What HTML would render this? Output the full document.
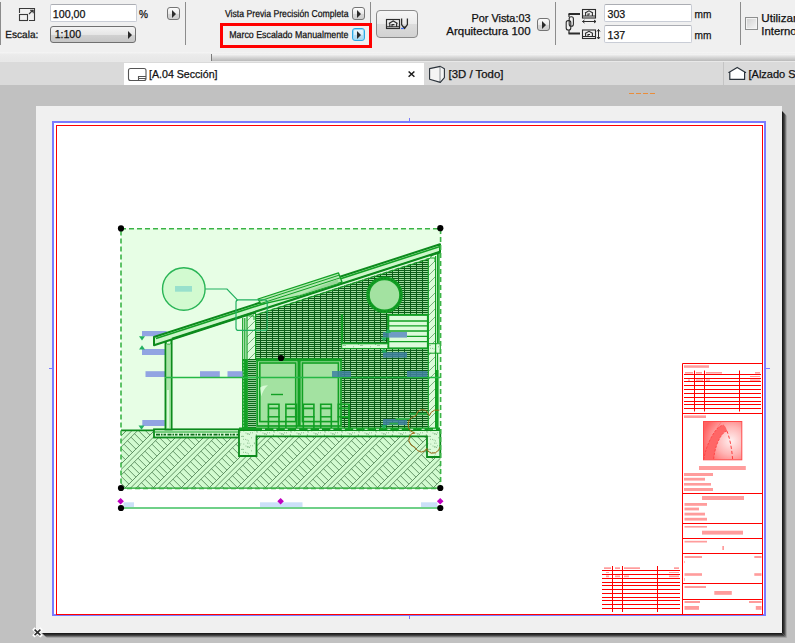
<!DOCTYPE html>
<html lang="es">
<head>
<meta charset="utf-8">
<title>Marco Escalado Manualmente</title>
<style>
html,body{margin:0;padding:0;}
body{width:795px;height:643px;overflow:hidden;position:relative;background:#c1c1c1;font-family:"Liberation Sans",sans-serif;font-size:10.5px;color:#111;}
.abs{position:absolute;}
#toolbar{left:0;top:0;width:795px;height:52px;background:#f0f0f0;}
#band{left:0;top:52px;width:795px;height:9px;background:linear-gradient(#f5f5f5,#ebebeb 30%,#e7e7e7);}
#band2{left:212px;top:54px;width:583px;height:7px;background:linear-gradient(#f6f6f6,#dcdcdc 40%,#b9b9b9);}
#tick{left:210.6px;top:54px;width:1.5px;height:7px;background:#7a7a7a;}
#tabs{left:0;top:61px;width:795px;height:24px;background:#dadada;border-top:1px solid #e8e8e8;box-sizing:border-box;}
#tab1{left:124px;top:63px;width:300px;height:22px;background:#fff;}
.sep{width:1px;background:#8c8c8c;top:2px;height:43px;}
.inp{background:#fff;border:1px solid #c9cdd6;border-top-color:#abadb3;border-radius:2px;box-sizing:border-box;}
.ab{width:13px;height:13px;box-sizing:border-box;border:1px solid #747474;border-radius:3px;background:linear-gradient(#fdfdfd,#e9e9e9 50%,#d6d6d6 51%,#cfcfcf);}
.ab:after{content:"";position:absolute;left:4px;top:1.5px;border-left:4.6px solid #2a2a2a;border-top:4px solid transparent;border-bottom:4px solid transparent;}
</style>
</head>
<body>
<div id="toolbar" class="abs"></div>
<div id="band" class="abs"></div>
<div id="band2" class="abs"></div>
<div id="tick" class="abs"></div>
<div id="tabs" class="abs"></div>
<div id="tab1" class="abs"></div>
<div class="abs sep" style="left:0"></div>
<div class="abs sep" style="left:185px"></div>
<div class="abs sep" style="left:370px;height:22px"></div>
<div class="abs sep" style="left:555px"></div>
<div class="abs sep" style="left:740px"></div>
<div class="abs inp" style="left:50px;top:4px;width:87px;height:18px"></div>
<div class="abs ab" style="left:167px;top:7px"></div>
<div class="abs" style="left:50px;top:26px;width:86px;height:17px;box-sizing:border-box;border:1px solid #707070;border-radius:3px;background:linear-gradient(#f4f4f4,#e6e6e6 50%,#d2d2d2 51%,#c6c6c6)"></div>
<div class="abs" style="left:128px;top:31px;border-left:4px solid #2a2a2a;border-top:4px solid transparent;border-bottom:4px solid transparent"></div>
<div class="abs ab" style="left:352px;top:7px"></div>
<div class="abs" style="left:220px;top:23px;width:152px;height:25px;box-sizing:border-box;border:3px solid #ff0000"></div>
<div class="abs ab" style="left:352px;top:28px;border:1.5px solid #2ea8e4;box-shadow:0 0 0 1px #9adcf8 inset;background:linear-gradient(#eef8fd,#d8eef9 50%,#bcdff2 51%,#acd6ee)"></div>
<div class="abs" style="left:376px;top:10px;width:42px;height:28px;box-sizing:border-box;border:1px solid #8a8a8a;border-radius:4px;background:linear-gradient(#f6f6f6,#ebebeb 50%,#dcdcdc 51%,#d2d2d2)"></div>
<div class="abs ab" style="left:537px;top:18px"></div>
<div class="abs inp" style="left:604px;top:4px;width:88px;height:18px"></div>
<div class="abs inp" style="left:604px;top:25px;width:88px;height:18px"></div>
<div class="abs" style="left:745px;top:17px;width:13px;height:13px;box-sizing:border-box;border:1px solid #8e8f8f;background:linear-gradient(135deg,#d0d0d0,#f6f6f6);box-shadow:0 0 0 1px #f4f4f4 inset"></div>
<div class="abs" style="left:723px;top:62px;width:1px;height:23px;background:#c4c4c4"></div>
<svg class="abs" style="left:0;top:0" width="795" height="643" viewBox="0 0 795 643">
<defs><linearGradient id="shr" x1="0" x2="1" y1="0" y2="0"><stop offset="0" stop-color="#101010"/><stop offset=".45" stop-color="#3c3c3c"/><stop offset=".8" stop-color="#8a8a8a"/><stop offset="1" stop-color="#c1c1c1"/></linearGradient><linearGradient id="shb" x1="0" x2="0" y1="0" y2="1"><stop offset="0" stop-color="#101010"/><stop offset=".45" stop-color="#3c3c3c"/><stop offset=".8" stop-color="#8a8a8a"/><stop offset="1" stop-color="#c1c1c1"/></linearGradient></defs><path d="M782 111L787 116V638L782 633Z" fill="url(#shr)"/><path d="M42 633H782L787 638H47Z" fill="url(#shb)"/><rect x="36" y="106" width="746" height="527" fill="#f0f0f0"/><rect x="53" y="122" width="712" height="493" fill="#fff" stroke="#7a7aff" stroke-width="2"/><path d="M409.5 118V121M409.5 616V619M49 368.5H52M766 368.5H770" stroke="#7a7aff" stroke-width="1"/><rect x="56.5" y="125.5" width="706" height="489" fill="none" stroke="#ff0000" stroke-width="1"/><path d="M34.6 629.6L40.4 635.2M40.4 629.6L34.6 635.2" stroke="#fff" stroke-width="3.4" stroke-linecap="square" fill="none"/><path d="M34.6 629.6L40.4 635.2M40.4 629.6L34.6 635.2" stroke="#2e2e2e" stroke-width="1.6" fill="none"/>
<defs><clipPath id="gcl"><rect x="121" y="430" width="319.5" height="58.5"/></clipPath><pattern id="bk" width="6" height="2" patternUnits="userSpaceOnUse" patternTransform="translate(255 255)"><rect width="6" height="2" fill="#0c5c17"/><rect x="0" y="0" width="5" height="1" fill="#a0dca0"/></pattern><pattern id="dh" width="8" height="2" patternUnits="userSpaceOnUse" patternTransform="translate(0 359)"><rect width="8" height="2" fill="#c4f0c2"/><rect width="8" height="1.25" fill="#0c6a1a"/></pattern><pattern id="wh" width="8" height="8" patternUnits="userSpaceOnUse"><rect width="8" height="8" fill="#dcfbda"/><path d="M-1 9L9 -1" stroke="#4f9155" stroke-width=".7"/></pattern><pattern id="cc" width="17" height="13" patternUnits="userSpaceOnUse"><rect width="17" height="13" fill="#dcfbda"/><path d="M5.5 2.1h.7M10.7 1.2h.7M8.9 4.8h.7M1.2 6.5h.7M0.9 5.6h.7M1.4 1.4h.7M7.1 10.4h.7M2.3 3.0h.7M10.3 11.9h.7M9.5 5.1h.7M15.9 0.9h.7M14.0 3.8h.7M2.6 1.7h.7M5.2 10.3h.7M3.2 7.4h.7M10.5 4.8h.7M9.1 1.1h.7M1.3 2.8h.7M11.2 5.5h.7M5.3 7.4h.7M7.6 4.0h.7M13.0 8.8h.7M4.2 7.3h.7M8.7 11.0h.7M12.0 3.8h.7M16.0 1.7h.7" stroke="#4a8f52" stroke-width=".75"/></pattern></defs><rect x="121" y="228.5" width="319.5" height="260" fill="#e7fee5"/><rect x="121" y="430" width="319.5" height="58.5" fill="#d2fbd0"/><path clip-path="url(#gcl)" d="M12.0 489L72.0 429M17.6 489L77.6 429M23.2 489L83.2 429M40.0 489L100.0 429M45.6 489L105.6 429M51.2 489L111.2 429M113.5 426.7L121.9 435.1M117.0 423.2L125.4 431.6M120.5 419.7L128.9 428.1M68.0 489L128.0 429M73.6 489L133.6 429M79.2 489L139.2 429M113.5 454.7L121.9 463.1M117.0 451.2L125.4 459.6M120.5 447.7L128.9 456.1M124.0 444.2L132.4 452.6M127.5 440.7L135.9 449.1M131.0 437.2L139.4 445.6M134.5 433.7L142.9 442.1M138.0 430.2L146.4 438.6M141.5 426.7L149.9 435.1M145.0 423.2L153.4 431.6M148.5 419.7L156.9 428.1M96.0 489L156.0 429M101.6 489L161.6 429M107.2 489L167.2 429M113.5 482.7L121.9 491.1M117.0 479.2L125.4 487.6M120.5 475.7L128.9 484.1M124.0 472.2L132.4 480.6M127.5 468.7L135.9 477.1M131.0 465.2L139.4 473.6M134.5 461.7L142.9 470.1M138.0 458.2L146.4 466.6M141.5 454.7L149.9 463.1M145.0 451.2L153.4 459.6M148.5 447.7L156.9 456.1M152.0 444.2L160.4 452.6M155.5 440.7L163.9 449.1M159.0 437.2L167.4 445.6M162.5 433.7L170.9 442.1M166.0 430.2L174.4 438.6M169.5 426.7L177.9 435.1M173.0 423.2L181.4 431.6M176.5 419.7L184.9 428.1M124.0 489L184.0 429M129.6 489L189.6 429M135.2 489L195.2 429M134.5 489.7L142.9 498.1M138.0 486.2L146.4 494.6M141.5 482.7L149.9 491.1M145.0 479.2L153.4 487.6M148.5 475.7L156.9 484.1M152.0 472.2L160.4 480.6M155.5 468.7L163.9 477.1M159.0 465.2L167.4 473.6M162.5 461.7L170.9 470.1M166.0 458.2L174.4 466.6M169.5 454.7L177.9 463.1M173.0 451.2L181.4 459.6M176.5 447.7L184.9 456.1M180.0 444.2L188.4 452.6M183.5 440.7L191.9 449.1M187.0 437.2L195.4 445.6M190.5 433.7L198.9 442.1M194.0 430.2L202.4 438.6M197.5 426.7L205.9 435.1M201.0 423.2L209.4 431.6M204.5 419.7L212.9 428.1M152.0 489L212.0 429M157.6 489L217.6 429M163.2 489L223.2 429M162.5 489.7L170.9 498.1M166.0 486.2L174.4 494.6M169.5 482.7L177.9 491.1M173.0 479.2L181.4 487.6M176.5 475.7L184.9 484.1M180.0 472.2L188.4 480.6M183.5 468.7L191.9 477.1M187.0 465.2L195.4 473.6M190.5 461.7L198.9 470.1M194.0 458.2L202.4 466.6M197.5 454.7L205.9 463.1M201.0 451.2L209.4 459.6M204.5 447.7L212.9 456.1M208.0 444.2L216.4 452.6M211.5 440.7L219.9 449.1M215.0 437.2L223.4 445.6M218.5 433.7L226.9 442.1M222.0 430.2L230.4 438.6M225.5 426.7L233.9 435.1M229.0 423.2L237.4 431.6M232.5 419.7L240.9 428.1M180.0 489L240.0 429M185.6 489L245.6 429M191.2 489L251.2 429M190.5 489.7L198.9 498.1M194.0 486.2L202.4 494.6M197.5 482.7L205.9 491.1M201.0 479.2L209.4 487.6M204.5 475.7L212.9 484.1M208.0 472.2L216.4 480.6M211.5 468.7L219.9 477.1M215.0 465.2L223.4 473.6M218.5 461.7L226.9 470.1M222.0 458.2L230.4 466.6M225.5 454.7L233.9 463.1M229.0 451.2L237.4 459.6M232.5 447.7L240.9 456.1M236.0 444.2L244.4 452.6M239.5 440.7L247.9 449.1M243.0 437.2L251.4 445.6M246.5 433.7L254.9 442.1M250.0 430.2L258.4 438.6M253.5 426.7L261.9 435.1M257.0 423.2L265.4 431.6M260.5 419.7L268.9 428.1M208.0 489L268.0 429M213.6 489L273.6 429M219.2 489L279.2 429M218.5 489.7L226.9 498.1M222.0 486.2L230.4 494.6M225.5 482.7L233.9 491.1M229.0 479.2L237.4 487.6M232.5 475.7L240.9 484.1M236.0 472.2L244.4 480.6M239.5 468.7L247.9 477.1M243.0 465.2L251.4 473.6M246.5 461.7L254.9 470.1M250.0 458.2L258.4 466.6M253.5 454.7L261.9 463.1M257.0 451.2L265.4 459.6M260.5 447.7L268.9 456.1M264.0 444.2L272.4 452.6M267.5 440.7L275.9 449.1M271.0 437.2L279.4 445.6M274.5 433.7L282.9 442.1M278.0 430.2L286.4 438.6M281.5 426.7L289.9 435.1M285.0 423.2L293.4 431.6M288.5 419.7L296.9 428.1M236.0 489L296.0 429M241.6 489L301.6 429M247.2 489L307.2 429M246.5 489.7L254.9 498.1M250.0 486.2L258.4 494.6M253.5 482.7L261.9 491.1M257.0 479.2L265.4 487.6M260.5 475.7L268.9 484.1M264.0 472.2L272.4 480.6M267.5 468.7L275.9 477.1M271.0 465.2L279.4 473.6M274.5 461.7L282.9 470.1M278.0 458.2L286.4 466.6M281.5 454.7L289.9 463.1M285.0 451.2L293.4 459.6M288.5 447.7L296.9 456.1M292.0 444.2L300.4 452.6M295.5 440.7L303.9 449.1M299.0 437.2L307.4 445.6M302.5 433.7L310.9 442.1M306.0 430.2L314.4 438.6M309.5 426.7L317.9 435.1M313.0 423.2L321.4 431.6M316.5 419.7L324.9 428.1M264.0 489L324.0 429M269.6 489L329.6 429M275.2 489L335.2 429M274.5 489.7L282.9 498.1M278.0 486.2L286.4 494.6M281.5 482.7L289.9 491.1M285.0 479.2L293.4 487.6M288.5 475.7L296.9 484.1M292.0 472.2L300.4 480.6M295.5 468.7L303.9 477.1M299.0 465.2L307.4 473.6M302.5 461.7L310.9 470.1M306.0 458.2L314.4 466.6M309.5 454.7L317.9 463.1M313.0 451.2L321.4 459.6M316.5 447.7L324.9 456.1M320.0 444.2L328.4 452.6M323.5 440.7L331.9 449.1M327.0 437.2L335.4 445.6M330.5 433.7L338.9 442.1M334.0 430.2L342.4 438.6M337.5 426.7L345.9 435.1M341.0 423.2L349.4 431.6M344.5 419.7L352.9 428.1M292.0 489L352.0 429M297.6 489L357.6 429M303.2 489L363.2 429M302.5 489.7L310.9 498.1M306.0 486.2L314.4 494.6M309.5 482.7L317.9 491.1M313.0 479.2L321.4 487.6M316.5 475.7L324.9 484.1M320.0 472.2L328.4 480.6M323.5 468.7L331.9 477.1M327.0 465.2L335.4 473.6M330.5 461.7L338.9 470.1M334.0 458.2L342.4 466.6M337.5 454.7L345.9 463.1M341.0 451.2L349.4 459.6M344.5 447.7L352.9 456.1M348.0 444.2L356.4 452.6M351.5 440.7L359.9 449.1M355.0 437.2L363.4 445.6M358.5 433.7L366.9 442.1M362.0 430.2L370.4 438.6M365.5 426.7L373.9 435.1M369.0 423.2L377.4 431.6M372.5 419.7L380.9 428.1M320.0 489L380.0 429M325.6 489L385.6 429M331.2 489L391.2 429M330.5 489.7L338.9 498.1M334.0 486.2L342.4 494.6M337.5 482.7L345.9 491.1M341.0 479.2L349.4 487.6M344.5 475.7L352.9 484.1M348.0 472.2L356.4 480.6M351.5 468.7L359.9 477.1M355.0 465.2L363.4 473.6M358.5 461.7L366.9 470.1M362.0 458.2L370.4 466.6M365.5 454.7L373.9 463.1M369.0 451.2L377.4 459.6M372.5 447.7L380.9 456.1M376.0 444.2L384.4 452.6M379.5 440.7L387.9 449.1M383.0 437.2L391.4 445.6M386.5 433.7L394.9 442.1M390.0 430.2L398.4 438.6M393.5 426.7L401.9 435.1M397.0 423.2L405.4 431.6M400.5 419.7L408.9 428.1M348.0 489L408.0 429M353.6 489L413.6 429M359.2 489L419.2 429M358.5 489.7L366.9 498.1M362.0 486.2L370.4 494.6M365.5 482.7L373.9 491.1M369.0 479.2L377.4 487.6M372.5 475.7L380.9 484.1M376.0 472.2L384.4 480.6M379.5 468.7L387.9 477.1M383.0 465.2L391.4 473.6M386.5 461.7L394.9 470.1M390.0 458.2L398.4 466.6M393.5 454.7L401.9 463.1M397.0 451.2L405.4 459.6M400.5 447.7L408.9 456.1M404.0 444.2L412.4 452.6M407.5 440.7L415.9 449.1M411.0 437.2L419.4 445.6M414.5 433.7L422.9 442.1M418.0 430.2L426.4 438.6M421.5 426.7L429.9 435.1M425.0 423.2L433.4 431.6M428.5 419.7L436.9 428.1M376.0 489L436.0 429M381.6 489L441.6 429M387.2 489L447.2 429M386.5 489.7L394.9 498.1M390.0 486.2L398.4 494.6M393.5 482.7L401.9 491.1M397.0 479.2L405.4 487.6M400.5 475.7L408.9 484.1M404.0 472.2L412.4 480.6M407.5 468.7L415.9 477.1M411.0 465.2L419.4 473.6M414.5 461.7L422.9 470.1M418.0 458.2L426.4 466.6M421.5 454.7L429.9 463.1M425.0 451.2L433.4 459.6M428.5 447.7L436.9 456.1M432.0 444.2L440.4 452.6M435.5 440.7L443.9 449.1M439.0 437.2L447.4 445.6M404.0 489L464.0 429M409.6 489L469.6 429M415.2 489L475.2 429M414.5 489.7L422.9 498.1M418.0 486.2L426.4 494.6M421.5 482.7L429.9 491.1M425.0 479.2L433.4 487.6M428.5 475.7L436.9 484.1M432.0 472.2L440.4 480.6M435.5 468.7L443.9 477.1M439.0 465.2L447.4 473.6M432.0 489L492.0 429M437.6 489L497.6 429M443.2 489L503.2 429M460.0 489L520.0 429M465.6 489L525.6 429M471.2 489L531.2 429M488.0 489L548.0 429M493.6 489L553.6 429M499.2 489L559.2 429" stroke="#477a4c" stroke-width=".8" fill="none"/><path d="M121 430.3H154" stroke="#0c8a1c" stroke-width="1.8"/><rect x="154" y="429.3" width="85" height="8.2" fill="#d8fad6" stroke="#0c8a1c" stroke-width="1.8"/><path d="M154 432H239" stroke="#12a024" stroke-width="1.1"/><path d="M156 434.6H238" stroke="#0a6a18" stroke-width="1.6" stroke-dasharray="4 1 1.5 1 2.5 1.5"/><path d="M239 430H440.3V457H427V436.3H256.5V456H239Z" fill="url(#cc)" stroke="#0c8a1c" stroke-width="1.8"/><path d="M256 312.9L428 257.2V428H341V359H256Z" fill="url(#bk)"/><rect x="256" y="359" width="85.5" height="69" fill="#a3e2a1"/><path d="M256 359.6H342" stroke="#12a024" stroke-width="2.6"/><rect x="257.2" y="360.5" width="41.1" height="65.5" fill="none" stroke="#12a024" stroke-width="1.7"/><rect x="259.8" y="363" width="35.9" height="58.6" fill="none" stroke="#12a024" stroke-width="1.6"/><rect x="299.8" y="360.5" width="41.2" height="65.5" fill="none" stroke="#12a024" stroke-width="1.7"/><rect x="302.40000000000003" y="363" width="36.0" height="58.6" fill="none" stroke="#12a024" stroke-width="1.6"/><path d="M260.3 387.5C262 386 265 385.3 268 385.2C264.5 388 262.5 392 261.2 396.5Z" fill="#d8fad6"/><path d="M271 394.5H283" stroke="#12a024" stroke-width="1.4"/><path d="M268.4 403.5V428M279.0 403.5V428M267.7 404.3H279.7M267.7 408.4H279.7" fill="none" stroke="#12a024" stroke-width="1.6"/><path d="M267.7 416.8H279.7" stroke="#12a024" stroke-width="1.5"/><path d="M285.9 403.5V428M296.5 403.5V428M285.2 404.3H297.2M285.2 408.4H297.2" fill="none" stroke="#12a024" stroke-width="1.6"/><path d="M285.2 416.8H297.2" stroke="#12a024" stroke-width="1.5"/><path d="M303.3 403.5V428M313.90000000000003 403.5V428M302.6 404.3H314.6M302.6 408.4H314.6" fill="none" stroke="#12a024" stroke-width="1.6"/><path d="M302.6 416.8H314.6" stroke="#12a024" stroke-width="1.5"/><path d="M320.7 403.5V428M331.3 403.5V428M320 404.3H332M320 408.4H332" fill="none" stroke="#12a024" stroke-width="1.6"/><path d="M320 416.8H332" stroke="#12a024" stroke-width="1.5"/><path d="M338.3 403.5V428M348.90000000000003 403.5V428M337.6 404.3H349.6M337.6 408.4H349.6" fill="none" stroke="#12a024" stroke-width="1.6"/><path d="M337.6 416.8H349.6" stroke="#12a024" stroke-width="1.5"/><path d="M349 404V428M340 417.3H349" stroke="#12a024" stroke-width="1.4"/><rect x="247" y="313" width="8.5" height="46" fill="url(#wh)"/><path d="M242.7 318V429M244.8 318V429M247 313V429M255.6 313V429M247 313H256" stroke="#12a024" stroke-width="1.2" fill="none"/><rect x="248" y="359" width="8" height="70" fill="url(#dh)"/><rect x="242.2" y="359" width="5.6" height="70" fill="#12a024"/><path d="M243.6 361V428" stroke="#7fd88a" stroke-width=".8" stroke-dasharray="2 1.2"/><path d="M248.5 316H254V320" stroke="#12a024" stroke-width="1" fill="none"/><rect x="428.3" y="255.5" width="7.2" height="174" fill="url(#wh)"/><rect x="428.3" y="343.7" width="12" height="9.5" fill="url(#cc)" stroke="#12a024" stroke-width="1"/><path d="M428.3 256V429M435.6 256V429M437.6 252V343M439 252V343M437.6 353V429" stroke="#12a024" stroke-width="1.2" fill="none"/><path d="M436.9 370V429" stroke="#12a024" stroke-width="3.2"/><path d="M430 258H435V262" stroke="#12a024" stroke-width="1" fill="none"/><path d="M341.9 315V343.7H388.4V316" fill="none" stroke="#12a024" stroke-width="2.2" stroke-linecap="round"/><rect x="341.7" y="343.8" width="46.6" height="4.7" fill="url(#cc)" stroke="#12a024" stroke-width="1"/><rect x="388.4" y="315" width="39.4" height="33.3" fill="#dcfbda" stroke="#12a024" stroke-width="1.8"/><path d="M389 321H427M389 325.8H427M389 331H427M389 336.3H427M389 341.6H427" stroke="#12a024" stroke-width="1.3"/><circle cx="384.5" cy="294.9" r="16.5" fill="#a3e2a1" stroke="#12a024" stroke-width="3.6"/><circle cx="384.5" cy="294.9" r="16.5" fill="none" stroke="#0c7a1a" stroke-width=".8" stroke-dasharray="2 1.5"/><rect x="142" y="331" width="24.7" height="5.2" fill="#92a4e2"/><rect x="142" y="349" width="23.0" height="6.0" fill="#92a4e2"/><rect x="145.5" y="371.2" width="19.5" height="5.8" fill="#92a4e2"/><rect x="200" y="371.2" width="19.8" height="5.8" fill="#92a4e2"/><rect x="227.5" y="371.2" width="15.0" height="5.8" fill="#92a4e2"/><rect x="142.3" y="420" width="22.5" height="6.0" fill="#92a4e2"/><rect x="165.4" y="340" width="6.3" height="89.5" fill="#a8e4a6" stroke="#0c8a1c" stroke-width="1.7"/><path d="M168 390V428" stroke="#d8fad6" stroke-width="2"/><rect x="166.4" y="340.5" width="4.4" height="3.6" fill="#e7fee5" stroke="#12a024" stroke-width=".8" rx="1"/><path d="M165 377.5H440" stroke="#25b845" stroke-width="1.3"/><path d="M154 337.0L440 244.3L440 252.3L154 345.3Z" fill="#cdf6ca" stroke="#0c8a1c" stroke-width="2" stroke-linejoin="round"/><path d="M156 338.6L440 246.5" stroke="#12a024" stroke-width="1.6"/><path d="M172 338.8L440 251.9" stroke="#0c8a1c" stroke-width="2.2"/><path d="M256 314.9L430 258.5" stroke="#12a024" stroke-width="1"/><path d="M256 313.3L430 256.9" stroke="#dcfbda" stroke-width="1.4"/><path d="M258 299.0L338.5 272.9L342 282.1L300 295.7L261 304.3Z" fill="#b5e9b2" stroke="#12a024" stroke-width="1.3" stroke-linejoin="round"/><path d="M259 301.2L339 275.2M260 303.8L340 277.9" stroke="#12a024" stroke-width="1"/><path d="M296 296.5L338 283.2L338 279.0Z" fill="#9ad89a"/><path d="M239 428.7H440" stroke="#12a024" stroke-width="2.2"/><path d="M262 429.3H440" stroke="#e7fee5" stroke-width="1" stroke-dasharray="3 8.4"/><circle cx="183.8" cy="289" r="21.3" fill="#d2fad0" stroke="#2ab556" stroke-width="1.4"/><rect x="175" y="286" width="17" height="5.7" fill="#98e0cc"/><path d="M205.3 289H227L237.6 300.2" fill="none" stroke="#22b060" stroke-width="1.2"/><rect x="236" y="299.8" width="31.2" height="30.6" rx="2.5" fill="none" stroke="#22b060" stroke-width="1.2"/><rect x="388.4" y="332" width="18.6" height="5.6" fill="#6f9bc4"/><rect x="383" y="332" width="5.4" height="5.6" fill="#3f7fa2" fill-opacity=".85"/><rect x="383" y="352.2" width="24.0" height="5.5" fill="#3f7fa2" fill-opacity=".85"/><rect x="332" y="371" width="19.0" height="6.0" fill="#3f7fa2" fill-opacity=".85"/><rect x="407" y="371" width="20.5" height="6.0" fill="#3f7fa2" fill-opacity=".85"/><rect x="383" y="419" width="24.0" height="6.0" fill="#3f7fa2" fill-opacity=".85"/><path d="M139 336.3L142 340.5L145 336.3Z" fill="#22b060"/><path d="M139 349.5L142 345.3L145 349.5Z" fill="#22b060"/><path d="M138.5 425.5L141.5 429.7L144.5 425.5Z" fill="#22b060"/><path d="M381 337.5L384 341.7L387 337.5Z" fill="#22b060"/><path d="M381 352.5L384 348.3L387 352.5Z" fill="#22b060"/><path d="M381 425L384 429.2L387 425Z" fill="#22b060"/><path d="M385 333L388 328.8L391 333Z" fill="#22b060"/><path d="M389.5 423.6H398M395.5 419H410M409 413.8H427" stroke="#2fae4a" stroke-width="1.8"/><path d="M439.3 410.2L434.4 410.2L431.1 412.4L429.5 415.7L427.9 413L425.7 410.2L421.3 409.7L418.1 411.3L415.9 415.7L412.6 417.3L409.4 419.5L408.3 423.3L408.5 427.6L410.5 430.9L414.8 433.1L411.6 433.6L409.4 436.9L408.8 440.7L411 445L414.8 447.2L417.5 450.5L421.3 452.1L424.6 451L426.8 448.3L427.9 451L431.1 453.2L435.5 452.7L438.8 450L439.8 447.2" fill="none" stroke="#9a6612" stroke-width="1" stroke-linejoin="round"/><path d="M121 488.1H440.5" stroke="#23a233" stroke-width="1.3"/><rect x="121" y="228.7" width="319.6" height="259.8" fill="none" stroke="#3bb346" stroke-width="1.6" stroke-dasharray="5 3"/><path d="M121 508H440.5" stroke="#3fc060" stroke-width="1.4"/><rect x="123.5" y="502.3" width="10.5" height="4.7" fill="#cbe0f8"/><rect x="260" y="502.3" width="42.5" height="4.7" fill="#cbe0f8"/><rect x="421" y="502.3" width="16.5" height="4.7" fill="#cbe0f8"/><path d="M117.3 501.3L120.6 498L123.89999999999999 501.3L120.6 504.6Z" fill="#c000c0"/><path d="M277.3 501.3L280.6 498L283.90000000000003 501.3L280.6 504.6Z" fill="#c000c0"/><path d="M436.9 501.3L440.2 498L443.5 501.3L440.2 504.6Z" fill="#c000c0"/><circle cx="121" cy="228.4" r="3.1" fill="#000"/><circle cx="440.3" cy="228.2" r="3.1" fill="#000"/><circle cx="121" cy="488" r="3.1" fill="#000"/><circle cx="440.3" cy="488" r="3.1" fill="#000"/><circle cx="121" cy="508" r="3.1" fill="#000"/><circle cx="440.3" cy="508" r="3.1" fill="#000"/><circle cx="281" cy="358" r="3.1" fill="#000"/>
<path d="M682.5 614V363.5H762" fill="none" stroke="#ff0000" stroke-width="1"/><path d="M682.5 413.5H762" stroke="#ff0000" stroke-width="1"/><path d="M682.5 493.5H762" stroke="#ff0000" stroke-width="1"/><path d="M682.5 523.5H762" stroke="#ff0000" stroke-width="1"/><path d="M682.5 538.5H762" stroke="#ff0000" stroke-width="1"/><path d="M682.5 553.5H762" stroke="#ff0000" stroke-width="1"/><path d="M682.5 583.5H762" stroke="#ff0000" stroke-width="1"/><path d="M682.5 599.5H762" stroke="#ff0000" stroke-width="1"/><path d="M684 374.5H761M684 378.5H761M684 381.5H761M684 385.5H761M684 389.5H761M684 393.5H761M684 397.5H761M684 401.5H761M684 404.5H761M684 408.5H761" stroke="#ff0000" stroke-width="1"/><path d="M694.5 370.5V411.5M704.5 370.5V411.5M739.5 370.5V411.5" stroke="#ff0000" stroke-width="1"/><rect x="684" y="365.3" width="25" height="2.5" fill="#ff9c9c"/><rect x="685" y="372" width="8" height="1.6" fill="#ff9c9c"/><rect x="696" y="372" width="6" height="1.6" fill="#ff9c9c"/><rect x="706" y="372" width="16" height="1.6" fill="#ff9c9c"/><rect x="755" y="372" width="5" height="1.6" fill="#ff9c9c"/><rect x="688" y="379.5" width="2" height="1.3" fill="#ff9c9c"/><rect x="696" y="379.5" width="7" height="1.3" fill="#ff9c9c"/><rect x="706" y="379.5" width="4" height="1.3" fill="#ff9c9c"/><rect x="750" y="379.5" width="10" height="1.3" fill="#ff9c9c"/><rect x="750" y="376" width="10" height="1" fill="#ff9c9c"/><rect x="684" y="415.4" width="22" height="2.6" fill="#ff9c9c"/><defs><radialGradient id="lg" cx=".72" cy=".5" r=".75"><stop offset="0" stop-color="#fff0f0"/><stop offset=".5" stop-color="#ffb4b4"/><stop offset="1" stop-color="#ff6262"/></radialGradient></defs><rect x="703.5" y="421.5" width="38.3" height="38.3" fill="url(#lg)" stroke="#ff4a4a" stroke-width="1"/><path d="M703.8 459.5C705 451 709 440 714.5 432C717.5 428 720.5 425.3 723.5 425C725.5 426 726.5 428.5 726.8 430.8C722.5 432.5 719 438.5 716.5 445.5C715 450 714 455 713.6 459.5Z" fill="#ff6666"/><path d="M703.8 459.5C705 451 709 440 714.5 432C717.5 428 720.5 425.3 723.5 425M726.8 430.8C722.5 432.5 719 438.5 716.5 445.5C715 450 714 455 713.6 459.5" fill="none" stroke="#ff3c3c" stroke-width=".8" stroke-dasharray="2.5 1.2"/><path d="M726.8 430.8C729.5 437 731.6 447 732.6 459" fill="none" stroke="#ff3c3c" stroke-width="1" stroke-dasharray="3.2 2"/><path d="M721.3 421.8L716.5 429" stroke="#ff6a6a" stroke-width=".6"/><rect x="699" y="466" width="46.8" height="4" fill="#ff9c9c"/><rect x="684" y="473" width="29" height="3" fill="#ff9c9c"/><rect x="684" y="477.8" width="21" height="2.8" fill="#ff9c9c"/><rect x="684" y="483" width="27" height="2.6" fill="#ff9c9c"/><rect x="684" y="488" width="29" height="3" fill="#ff9c9c"/><rect x="702" y="496" width="42" height="4" fill="#ff9c9c"/><rect x="684.5" y="503" width="22.5" height="2.8" fill="#ff9c9c"/><rect x="684.5" y="507.6" width="14.5" height="2.8" fill="#ff9c9c"/><rect x="684.5" y="512.7" width="20.5" height="2.8" fill="#ff9c9c"/><rect x="684.5" y="517.8" width="22.5" height="2.8" fill="#ff9c9c"/><rect x="684.5" y="526" width="22.5" height="1.6" fill="#ff9c9c"/><rect x="702" y="530.7" width="41" height="3.9" fill="#ff9c9c"/><rect x="684.5" y="540.8" width="22.5" height="1.7" fill="#ff9c9c"/><rect x="722.3" y="546" width="1.7" height="4" fill="#ff9c9c"/><rect x="684.5" y="556" width="17.5" height="2" fill="#ff9c9c"/><rect x="754.3" y="556" width="7.2" height="2" fill="#ff9c9c"/><rect x="684.5" y="573.2" width="17.5" height="2.6" fill="#ff9c9c"/><rect x="754.3" y="573.2" width="7.2" height="2.6" fill="#ff9c9c"/><rect x="684.3" y="561" width="0.7" height="2" fill="#ff9c9c"/><rect x="684.3" y="578" width="0.7" height="3" fill="#ff9c9c"/><rect x="684.5" y="586" width="21.5" height="2" fill="#ff9c9c"/><rect x="714.3" y="591" width="17.5" height="3.8" fill="#ff9c9c"/><rect x="684.5" y="601" width="15.5" height="2" fill="#ff9c9c"/><rect x="749" y="601" width="12.5" height="2" fill="#ff9c9c"/><rect x="684.5" y="606" width="14.5" height="3.8" fill="#ff9c9c"/><rect x="755.8" y="606" width="5.7" height="3.8" fill="#ff9c9c"/><path d="M602 570.5H680M602 574.5H680M602 578.5H680M602 582.5H680M602 585.5H680M602 589.5H680M602 593.5H680M602 597.5H680M602 600.5H680M602 604.5H680M602 608.5H680" stroke="#ff0000" stroke-width="1"/><path d="M612.5 566V612M622.5 566V612M657.5 566V612" stroke="#ff0000" stroke-width="1"/><rect x="604" y="567.3" width="7" height="1.7" fill="#ff9c9c"/><rect x="615" y="567.3" width="5" height="1.7" fill="#ff9c9c"/><rect x="624" y="567.3" width="16" height="1.7" fill="#ff9c9c"/><rect x="674" y="567.3" width="5" height="1.7" fill="#ff9c9c"/><rect x="606" y="575.5" width="3" height="1.7" fill="#ff9c9c"/><rect x="615" y="575.5" width="5" height="1.7" fill="#ff9c9c"/><rect x="624" y="575.5" width="5" height="1.7" fill="#ff9c9c"/><rect x="669" y="575.5" width="10" height="1.7" fill="#ff9c9c"/><rect x="606" y="572" width="3" height="1" fill="#ff9c9c"/><rect x="669" y="572" width="10" height="1" fill="#ff9c9c"/>
<g fill="none" stroke="#3a3a3a" stroke-width="1.1"><path d="M19.5 13V8.5H34.5V20.5H29"/><rect x="19.5" y="14.5" width="8" height="6"/><path d="M29 14L33 10M30 10.2H33.2V13.3"/></g><g fill="none" stroke="#2c2c2c" stroke-width="1.15"><rect x="386.5" y="19.5" width="13" height="9"/><path d="M387 26.7H399.5M388.8 23.6L393.2 21L397.6 23.6M389.8 23.5V26.5M396.6 23.5V26.5M392 26.5V24.6H394.4"/></g><path d="M401.6 18.5V24.6L404.5 28.5L407.4 24.6V18.5" fill="none" stroke="#2c2c2c" stroke-width="1.3" stroke-linejoin="round"/><path d="M403.3 26.6H405.7L404.5 28.6Z" fill="#2c2c2c"/><path d="M401 28.5H403.8" stroke="#3a6cf0" stroke-width="1.2"/><g fill="none" stroke="#2c2c2c"><path d="M568.5 14H580M568.5 33.5H580" stroke-width="2"/><path d="M569 14V17M569 33.5V30" stroke-width="1.2"/><rect x="566.2" y="20.6" width="4.6" height="9.4" rx="2" stroke-width="1.1"/><rect x="569.2" y="16.8" width="4.2" height="9.4" rx="2" stroke-width="1.1"/></g><g fill="none" stroke="#2c2c2c" stroke-width="1.1"><rect x="582.5" y="9.5" width="13" height="8.5"/><path d="M583 16H595M585 13L589 10.8L593 13M585.6 13V15.8M592.4 13V15.8M588 15.8V14H590"/></g><g fill="none" stroke="#2c2c2c" stroke-width="1.1"><rect x="582.5" y="30.0" width="13" height="8.5"/><path d="M583 36.5H595M585 33.5L589 31.3L593 33.5M585.6 33.5V36.3M592.4 33.5V36.3M588 36.3V34.5H590"/></g><g fill="none" stroke="#2c2c2c" stroke-width="1"><path d="M582.5 21.5H596M584.5 20L582.5 21.5L584.5 23M594 20L596 21.5L594 23"/><path d="M598.5 29.5V39M597 31.5L598.5 29.5L600 31.5M597 37L598.5 39L600 37"/></g><g fill="none" stroke="#555" stroke-width="1.1"><rect x="128.5" y="68.5" width="17.5" height="12" rx="2"/><path d="M138.5 80.5V76.5H146M138.5 78.5H146"/></g><path d="M408.6 71.5L414.4 76.8M414.4 71.5L408.6 76.8" stroke="#1c1c1c" stroke-width="1.5" fill="none"/><g fill="#f4f4f4" stroke="#2a323a" stroke-width="1.1" stroke-linejoin="round"><path d="M429.6 68.6L440.3 66.4V82.4L429.6 79.2Z"/><path d="M440.3 66.4L444.4 68.8V77.6L440.3 82.4"/></g><path d="M729.8 79.4V72.2L728.8 72.4L737.2 67.4L745.6 72.4L744.6 72.2V79.4Z" fill="#fff" stroke="#2a323a" stroke-width="1.2" stroke-linejoin="round"/><path d="M629 93.5H656" stroke="#ea8d3a" stroke-width="1" stroke-dasharray="5 2"/>
<g font-family="Liberation Sans, sans-serif" stroke="#111" stroke-width=".25"><text x="52.8" y="18" font-size="10.5" fill="#111" textLength="32.7" lengthAdjust="spacingAndGlyphs">100,00</text><text x="139" y="18" font-size="10.5" fill="#111" textLength="9" lengthAdjust="spacingAndGlyphs">%</text><text x="5.3" y="38" font-size="10.2" fill="#111" text-rendering="geometricPrecision" textLength="33" lengthAdjust="spacingAndGlyphs">Escala:</text><text x="54.7" y="38" font-size="10.5" fill="#111" textLength="26.4" lengthAdjust="spacingAndGlyphs">1:100</text><text x="225" y="17" font-size="10" fill="#111" text-rendering="geometricPrecision" textLength="123.5" lengthAdjust="spacingAndGlyphs">Vista Previa Precisión Completa</text><text x="229.2" y="38" font-size="10" fill="#111" text-rendering="geometricPrecision" textLength="119.3" lengthAdjust="spacingAndGlyphs">Marco Escalado Manualmente</text><text x="471.4" y="22" font-size="10.5" fill="#111" textLength="59.2" lengthAdjust="spacingAndGlyphs">Por Vista:03</text><text x="446.3" y="35" font-size="10.5" fill="#111" textLength="84.3" lengthAdjust="spacingAndGlyphs">Arquitectura 100</text><text x="607.5" y="18" font-size="10.5" fill="#111" textLength="17.7" lengthAdjust="spacingAndGlyphs">303</text><text x="607.5" y="39" font-size="10.5" fill="#111" textLength="17.7" lengthAdjust="spacingAndGlyphs">137</text><text x="694.6" y="18" font-size="10.5" fill="#111" textLength="16.9" lengthAdjust="spacingAndGlyphs">mm</text><text x="694.6" y="39" font-size="10.5" fill="#111" textLength="16.9" lengthAdjust="spacingAndGlyphs">mm</text><text x="761.3" y="22" font-size="10.5" fill="#111" textLength="35.6" lengthAdjust="spacingAndGlyphs">Utilizar</text><text x="761.3" y="35" font-size="10.5" fill="#111" textLength="35.4" lengthAdjust="spacingAndGlyphs">Interno</text><text x="149" y="78" font-size="10.5" fill="#111" textLength="68.5" lengthAdjust="spacingAndGlyphs">[A.04 Sección]</text><text x="448.6" y="78" font-size="10.5" fill="#111" textLength="54.8" lengthAdjust="spacingAndGlyphs">[3D / Todo]</text><text x="748.5" y="78" font-size="10.5" fill="#111" textLength="60" lengthAdjust="spacingAndGlyphs">[Alzado Sur]</text></g>
</svg>
</body>
</html>
